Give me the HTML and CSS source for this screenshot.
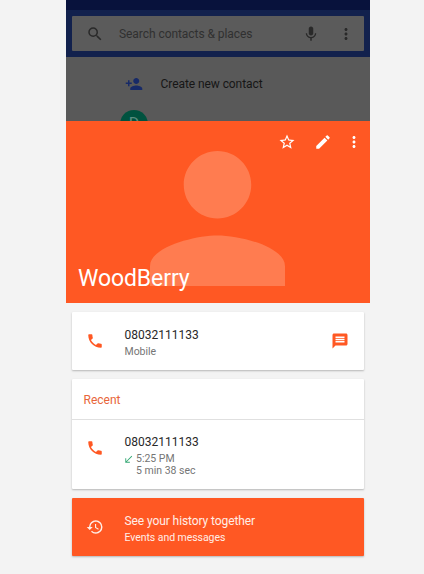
FILE: index.html
```html
<!DOCTYPE html>
<html lang="en">
<head>
<meta charset="utf-8">
<title>WoodBerry</title>
<link rel="stylesheet" href="styles.css">
</head>
<body>
<main class="phone">
  <section class="backdrop">
    <div class="status"></div>
    <div class="toolbar">
      <div class="search">
        <svg class="icon" viewBox="0 0 24 24"><path d="M15.5 14h-.79l-.28-.27A6.47 6.47 0 0 0 16 9.5 6.5 6.5 0 1 0 9.5 16c1.61 0 3.09-.59 4.23-1.57l.27.28v.79l5 4.99L20.49 19l-4.99-5zm-6 0C7.01 14 5 11.99 5 9.5S7.01 5 9.5 5 14 7.01 14 9.5 11.99 14 9.5 14z"/></svg>
        <span class="search-text">Search contacts &amp; places</span>
        <svg class="icon mic" viewBox="0 0 24 24"><path d="M12 14c1.66 0 3-1.34 3-3V5c0-1.66-1.34-3-3-3S9 3.340 9 5v6c0 1.660 1.340 3 3 3zm5.300-3c0 3-2.540 5.100-5.300 5.100S6.700 14 6.700 11H5c0 3.410 2.720 6.230 6 6.720V21h2v-3.280c3.280-.480 6-3.300 6-6.720h-1.700z"/></svg>
        <svg class="icon" viewBox="0 0 24 24"><path d="M12 8c1.100 0 2-.9 2-2s-.9-2-2-2-2 .9-2 2 .9 2 2 2zm0 2c-1.100 0-2 .9-2 2s.9 2 2 2 2-.9 2-2-.9-2-2-2zm0 6c-1.100 0-2 .9-2 2s.9 2 2 2 2-.9 2-2-.9-2-2-2z"/></svg>
      </div>
    </div>
    <div class="contacts">
      <div class="create">
        <svg class="icon add" viewBox="0 0 24 24"><path d="M15 12c2.210 0 4-1.790 4-4s-1.790-4-4-4-4 1.790-4 4 1.790 4 4 4zm-9-2V7H4v3H1v2h3v3h2v-3h3v-2H6zm9 4c-2.670 0-8 1.340-8 4v2h16v-2c0-2.660-5.330-4-8-4z"/></svg>
        <span>Create new contact</span>
      </div>
      <div class="avatar">D</div>
    </div>
  </section>

  <header class="hero">
    <svg class="person" viewBox="4 4 16 16"><path d="M12 12c2.210 0 4-1.790 4-4s-1.790-4-4-4-4 1.790-4 4 1.790 4 4 4zm0 2c-2.670 0-8 1.340-8 3.650V20h16v-2.350C20 15.340 14.670 14 12 14z"/></svg>
    <nav class="actions">
      <svg class="icon star" viewBox="0 0 24 24"><path d="M22 9.240l-7.190-.62L12 2 9.190 8.630 2 9.240l5.460 4.730L5.820 21 12 17.270 18.180 21l-1.630-7.030L22 9.240zM12 15.400l-3.760 2.270 1-4.280-3.320-2.880 4.380-.38L12 6.100l1.710 4.040 4.380.38-3.320 2.880 1 4.280L12 15.400z"/></svg>
      <svg class="icon" viewBox="0 0 24 24"><path d="M3 17.250V21h3.750L17.810 9.940l-3.750-3.750L3 17.250zM20.710 7.040a1 1 0 0 0 0-1.410l-2.340-2.340a1 1 0 0 0-1.410 0l-1.830 1.830 3.750 3.750 1.830-1.830z"/></svg>
      <svg class="icon" viewBox="0 0 24 24"><path d="M12 8c1.100 0 2-.9 2-2s-.9-2-2-2-2 .9-2 2 .9 2 2 2zm0 2c-1.100 0-2 .9-2 2s.9 2 2 2 2-.9 2-2-.9-2-2-2zm0 6c-1.100 0-2 .9-2 2s.9 2 2 2 2-.9 2-2-.9-2-2-2z"/></svg>
    </nav>
    <h1 class="name">WoodBerry</h1>
  </header>

  <div class="cards">
    <section class="card row">
      <svg class="icon" viewBox="0 0 24 24"><path d="M6.620 10.790c1.440 2.830 3.760 5.140 6.590 6.590l2.200-2.200c.27-.27.67-.36 1.020-.24 1.120.37 2.330.57 3.570.57.55 0 1 .45 1 1V20c0 .55-.45 1-1 1-9.390 0-17-7.610-17-17 0-.55.45-1 1-1h3.500c.55 0 1 .45 1 1 0 1.250.2 2.450.57 3.570.11.35.03.74-.25 1.020l-2.200 2.200z"/></svg>
      <div class="info">
        <div class="title">08032111133</div>
        <div class="sub">Mobile</div>
      </div>
      <svg class="icon" viewBox="0 0 24 24"><path d="M20 2H4c-1.100 0-1.990.9-1.990 2L2 22l4-4h14c1.100 0 2-.9 2-2V4c0-1.100-.9-2-2-2zm-2 12H6v-2h12v2zm0-3H6V9h12v2zm0-3H6V6h12v2z"/></svg>
    </section>

    <section class="card">
      <h2 class="heading">Recent</h2>
      <div class="row call">
        <svg class="icon" viewBox="0 0 24 24"><path d="M6.620 10.790c1.440 2.830 3.760 5.140 6.590 6.590l2.200-2.200c.27-.27.67-.36 1.020-.24 1.120.37 2.330.57 3.570.57.55 0 1 .45 1 1V20c0 .55-.45 1-1 1-9.390 0-17-7.610-17-17 0-.55.45-1 1-1h3.500c.55 0 1 .45 1 1 0 1.250.2 2.450.57 3.570.11.35.03.74-.25 1.020l-2.200 2.200z"/></svg>
        <div class="info">
          <div class="title">08032111133</div>
          <div class="details">
            <svg class="received" viewBox="0 0 24 24"><path d="M20 5.410L18.590 4 7 15.590V9H5v10h10v-2H8.410z"/></svg>
            <div>5:25 PM<br>5 min 38 sec</div>
          </div>
        </div>
      </div>
    </section>

    <section class="card row history">
      <svg class="icon" viewBox="0 0 24 24"><path d="M13 3a9 9 0 0 0-9 9H1l3.890 3.890.07.14L9 12H6c0-3.870 3.130-7 7-7s7 3.130 7 7-3.130 7-7 7c-1.930 0-3.680-.79-4.940-2.060l-1.420 1.420A8.954 8.954 0 0 0 13 21a9 9 0 0 0 0-18zm-1 5v5l4.280 2.540.72-1.210-3.500-2.080V8H12z"/></svg>
      <div class="info">
        <div class="title">See your history together</div>
        <div class="sub">Events and messages</div>
      </div>
    </section>
  </div>
</main>
</body>
</html>
```
FILE: styles.css
```css
* { box-sizing: border-box; }

body {
  margin: 0;
  height: 574px;
  overflow: hidden;
  background: #f3f3f3;
  font-family: Roboto, "Liberation Sans", sans-serif;
  font-size: 12px;
}

svg { display: block; flex: none; fill: currentColor; }
.icon { width: 18px; height: 18px; }
h1, h2 { margin: 0; font-weight: 400; }

.phone { width: 303.5px; margin-left: 66px; }

.backdrop {
  height: 121px;
  overflow: hidden;
  background: #595959;
  color: #161616;
}
.status { height: 10px; background: #08123c; }
.toolbar { height: 47px; padding: 6px 5.5px; background: #12214d; }
.search {
  display: flex;
  align-items: center;
  height: 35px;
  padding: 0 9px 0 14.5px;
  border-radius: 1px;
  background: #5b5b5b;
  color: #292929;
}
.search-text { flex: 1; margin-left: 15px; color: #303030; letter-spacing: -.06px; }
.mic { margin-right: 17.5px; }

.contacts { padding: 18px 0 0 54px; }
.create { display: flex; align-items: center; height: 18px; gap: 17.5px; letter-spacing: -.07px; }
.add { margin-left: 5px; color: #172a68; }
.avatar {
  width: 28px;
  height: 28px;
  margin-top: 17px;
  border-radius: 50%;
  background: #00523f;
  color: #5b8d80;
  font-size: 16px;
  line-height: 28px;
  text-align: center;
}

.hero {
  display: grid;
  height: 182px;
  background: #ff5823;
  color: #fff;
}
.hero > * { grid-area: 1 / 1; }
.person { width: 135px; height: 135px; margin: 30px 0 0 84px; fill: #ff7c50; }
.actions { display: flex; justify-content: flex-end; gap: 13px; padding: 11.5px 7px 0 0; height: 40px; }
.star { margin-right: 4.5px; }
.name { align-self: end; padding: 0 0 10.5px 12px; font-size: 23px; line-height: 29px; letter-spacing: -.1px; }

.cards { display: grid; gap: 9px; padding: 9px 5.5px 0; }
.card {
  border-radius: 1px;
  background: #fff;
  box-shadow: 0 1px 2px rgba(0, 0, 0, .25);
  color: #ff5823;
}
.row { display: flex; height: 58px; padding: 20px 15px 0 14.5px; }
.info { flex: 1; margin: -5px 0 0 20.5px; }
.title { color: #282828; line-height: 16px; }
.sub { margin-top: 1px; color: #757575; font-size: 10.5px; line-height: 16px; letter-spacing: -.04px; }
.heading { height: 41px; padding-left: 12px; border-bottom: 1px solid #e0e0e0; color: #e8653a; font-size: 12px; line-height: 42px; }
.call { height: 69px; padding-top: 19px; }
.details { display: flex; gap: 2.5px; margin-top: 3px; color: #757575; font-size: 10.5px; line-height: 12px; }
.received { width: 11px; height: 11px; margin: 1px 0 0 -2px; color: #35a874; }
.history { background: #ff5823; color: #ffeee7; }
.history .info { margin-top: -5px; }
.history .title { color: #ffeee7; letter-spacing: -.09px; }
.history .sub { color: #ffeee7; letter-spacing: -.06px; }
```
